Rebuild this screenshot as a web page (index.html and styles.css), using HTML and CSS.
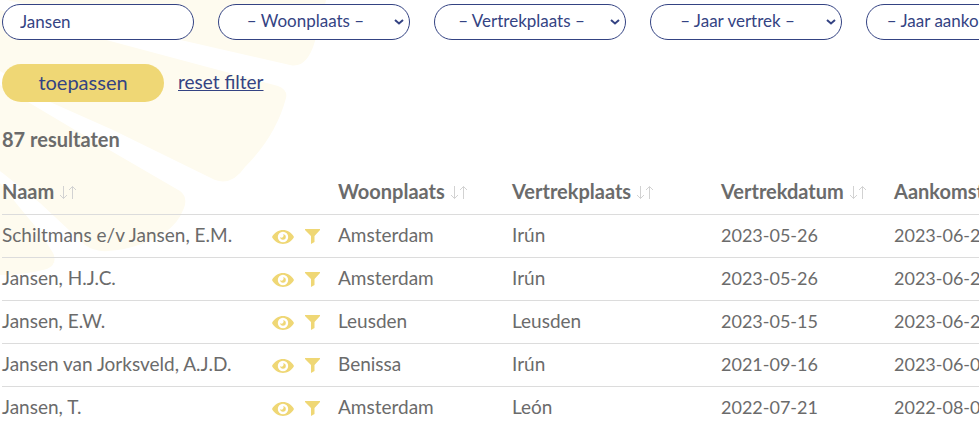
FILE: index.html
```html
<!DOCTYPE html>
<html lang="nl">
<head>
    <meta charset="UTF-8">
    <meta name="viewport" content="width=device-width, initial-scale=1.0">
    <title>Resultaten</title>
    <link rel="stylesheet" href="styles.css">
</head>
<body>
    <svg class="shell" width="330" height="280" viewBox="0 0 330 280" aria-hidden="true">
        <path d="M7 0H326Q322 22 315 41Q307 69 290 65L185 41Z"/>
        <path d="M0 10L110 41L278 86Q288 90 286 98Q276 136 245 167Q232 186 215 180L113 130L50 102L0 71Z"/>
        <path d="M0 85L28 102L75 130L180 191Q188 197 184 208Q178 224 164 233Q138 249 108 251Q95 252 85 245L40 203L0 171Z"/>
        <path d="M0 183L20 208L40 232L53 253Q58 264 47 269Q25 275 0 275Z"/>
    </svg>
    <svg class="symbols" aria-hidden="true">
        <symbol id="eye" viewBox="0 0 22 14">
            <path fill-rule="evenodd" d="M0 7C5 -2.300 17 -2.300 22 7C17 16.300 5 16.300 0 7ZM11 1.800A5.200 5.200 0 1 0 11 12.200A5.200 5.200 0 1 0 11 1.800Z"/>
            <path d="M11 4.200A2.800 2.800 0 1 1 8.200 7A1.600 1.600 0 0 0 11 4.200Z"/>
        </symbol>
        <symbol id="funnel" viewBox="0 0 15 15">
            <path d="M0 0H15V1L9.500 7V13L6 15V7L0 1Z"/>
        </symbol>
        <symbol id="sort" viewBox="0 0 17 15">
            <path d="M4.500 1V13.500M1 10L4.500 13.500L8 10M13.500 14V1.500M10 5L13.500 1.500L17 5"/>
        </symbol>
    </svg>
    <form class="filter">
        <div class="fields">
            <input class="field" type="text" value="Jansen" aria-label="Naam">
            <select class="field" aria-label="Woonplaats"><option>– Woonplaats –</option></select>
            <select class="field" aria-label="Vertrekplaats"><option>– Vertrekplaats –</option></select>
            <select class="field" aria-label="Jaar vertrek"><option>– Jaar vertrek –</option></select>
            <select class="field" aria-label="Jaar aankomst"><option>– Jaar aankomst –</option></select>
        </div>
        <div class="actions">
            <button class="apply" type="submit">toepassen</button>
            <a class="reset" href="#">reset filter</a>
        </div>
    </form>
    <h2 class="count">87 resultaten</h2>
    <table class="results">
        <colgroup>
            <col class="col-name">
            <col class="col-icons">
            <col class="col-home">
            <col class="col-start">
            <col class="col-date">
            <col class="col-date">
        </colgroup>
        <thead>
            <tr>
                <th>Naam <svg class="sort"><use href="#sort"/></svg></th>
                <th></th>
                <th>Woonplaats <svg class="sort"><use href="#sort"/></svg></th>
                <th>Vertrekplaats <svg class="sort"><use href="#sort"/></svg></th>
                <th>Vertrekdatum <svg class="sort"><use href="#sort"/></svg></th>
                <th>Aankomstdatum <svg class="sort"><use href="#sort"/></svg></th>
            </tr>
        </thead>
        <tbody>
            <tr>
                <td>Schiltmans e/v Jansen, E.M.</td>
                <td><div class="icons"><a href="#" aria-label="Bekijk"><svg class="eye"><use href="#eye"/></svg></a><a href="#" aria-label="Filter"><svg class="funnel"><use href="#funnel"/></svg></a></div></td>
                <td>Amsterdam</td>
                <td>Irún</td>
                <td class="date">2023-05-26</td>
                <td class="date">2023-06-2</td>
            </tr>
            <tr>
                <td>Jansen, H.J.C.</td>
                <td><div class="icons"><a href="#" aria-label="Bekijk"><svg class="eye"><use href="#eye"/></svg></a><a href="#" aria-label="Filter"><svg class="funnel"><use href="#funnel"/></svg></a></div></td>
                <td>Amsterdam</td>
                <td>Irún</td>
                <td class="date">2023-05-26</td>
                <td class="date">2023-06-2</td>
            </tr>
            <tr>
                <td>Jansen, E.W.</td>
                <td><div class="icons"><a href="#" aria-label="Bekijk"><svg class="eye"><use href="#eye"/></svg></a><a href="#" aria-label="Filter"><svg class="funnel"><use href="#funnel"/></svg></a></div></td>
                <td>Leusden</td>
                <td>Leusden</td>
                <td class="date">2023-05-15</td>
                <td class="date">2023-06-2</td>
            </tr>
            <tr>
                <td>Jansen van Jorksveld, A.J.D.</td>
                <td><div class="icons"><a href="#" aria-label="Bekijk"><svg class="eye"><use href="#eye"/></svg></a><a href="#" aria-label="Filter"><svg class="funnel"><use href="#funnel"/></svg></a></div></td>
                <td>Benissa</td>
                <td>Irún</td>
                <td class="date">2021-09-16</td>
                <td class="date">2023-06-0</td>
            </tr>
            <tr>
                <td>Jansen, T.</td>
                <td><div class="icons"><a href="#" aria-label="Bekijk"><svg class="eye"><use href="#eye"/></svg></a><a href="#" aria-label="Filter"><svg class="funnel"><use href="#funnel"/></svg></a></div></td>
                <td>Amsterdam</td>
                <td>León</td>
                <td class="date">2022-07-21</td>
                <td class="date">2022-08-0</td>
            </tr>
        </tbody>
    </table>
</body>
</html>
```
FILE: styles.css
```css
body {
    margin: 0;
    padding: 4px 0 0 2px;
    overflow: hidden;
    background: #fff;
    color: #6b6b6b;
    font: 19px/24px Lato, sans-serif;
}
.shell {
    position: absolute;
    top: 0;
    left: 0;
    z-index: -1;
    fill: #fefbef;
}
.symbols {
    position: absolute;
    width: 0;
    height: 0;
}
.fields {
    display: flex;
    gap: 24px;
}
.field {
    flex: none;
    box-sizing: border-box;
    width: 192px;
    height: 36px;
    padding: 0 17px 2px;
    border: 1px solid #344383;
    border-radius: 18px;
    background-color: #fff;
    color: #344383;
    font: 17px/24px Lato, sans-serif;
}
select.field {
    appearance: none;
    padding: 0 17px 2px 0;
    background-image: url("data:image/svg+xml,%3Csvg xmlns='http://www.w3.org/2000/svg' width='10' height='6'%3E%3Cpath d='M1 1L5 4.500L9 1' fill='none' stroke='%23344383' stroke-width='2'/%3E%3C/svg%3E");
    background-repeat: no-repeat;
    background-position: right 5px center;
    text-align: center;
    text-align-last: center;
}
.actions {
    display: flex;
    align-items: center;
    gap: 14px;
    margin-top: 24px;
}
.apply {
    width: 162px;
    height: 38px;
    padding: 0 0 2px;
    border: 0;
    border-radius: 19px;
    background: #efd775;
    color: #344383;
    font: 20px/24px Lato, sans-serif;
    cursor: pointer;
}
.reset {
    padding-bottom: 2px;
    color: #344383;
}
.count {
    margin: 25px 0 0;
    font-size: 20px;
    line-height: 24px;
}
.results {
    width: 1065px;
    margin-top: 21px;
    table-layout: fixed;
    border-collapse: collapse;
}
.col-name {
    width: 270px;
}
.col-icons {
    width: 66px;
}
.col-home {
    width: 174px;
}
.col-start {
    width: 209px;
}
.col-date {
    width: 173px;
}
th,
td {
    height: 40px;
    padding: 0 0 2px;
    border-bottom: 1px solid #dcdcdc;
    text-align: left;
    white-space: nowrap;
}
th {
    height: 38px;
    padding-bottom: 4px;
    font-size: 20px;
}
.date {
    font-size: 18px;
}
.sort {
    width: 17px;
    height: 15px;
    fill: none;
    stroke: #d2d2d2;
    vertical-align: -1px;
}
.icons {
    display: flex;
    align-items: center;
    gap: 11px;
    padding-top: 3px;
}
.icons a {
    display: flex;
}
.icons svg {
    fill: #efd775;
}
.eye {
    width: 22px;
    height: 14px;
}
.funnel {
    width: 15px;
    height: 15px;
}
```
